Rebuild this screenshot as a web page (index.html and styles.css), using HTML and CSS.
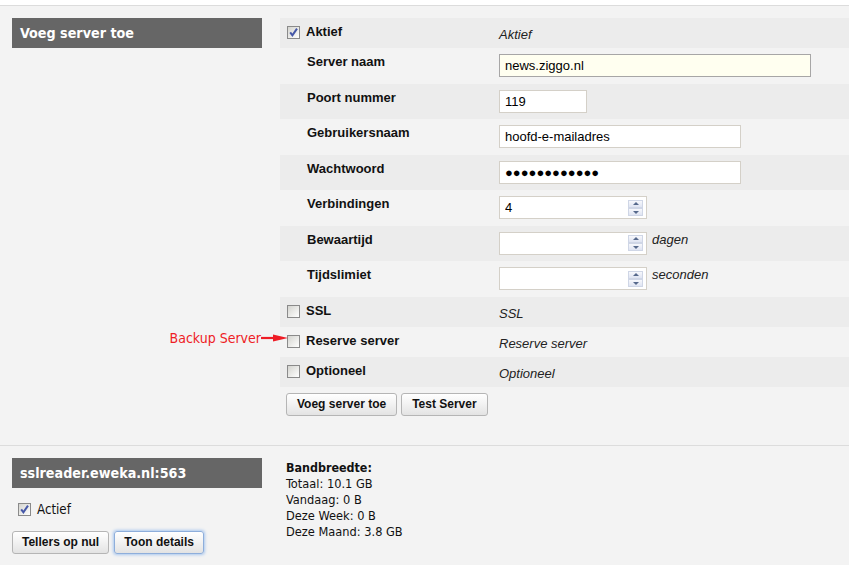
FILE: index.html
```html
<!DOCTYPE html>
<html>
<head>
<meta charset="utf-8">
<link rel="stylesheet" href="styles.css">
</head>
<body>
<div class="topbar"></div>

<div class="section">
  <div class="side">
    <div class="head">Voeg server toe</div>
  </div>
  <div class="main">
    <div class="row dark chk">
      <div class="lab"><span class="cbwrap"><span class="cb on"><svg viewBox="0 0 11 11" width="11" height="11"><path d="M2.2 5.4 L4.4 8.3 L9 1.6" fill="none" stroke="#4658a8" stroke-width="2"/></svg></span></span>Aktief</div>
      <div class="val note">Aktief</div>
    </div>
    <div class="row fld">
      <div class="lab">Server naam</div>
      <div class="val"><input class="in focus w312" type="text" value="news.ziggo.nl"></div>
    </div>
    <div class="row dark fld">
      <div class="lab">Poort nummer</div>
      <div class="val"><input class="in w88" type="text" value="119"></div>
    </div>
    <div class="row fld">
      <div class="lab">Gebruikersnaam</div>
      <div class="val"><input class="in w242" type="text" value="hoofd-e-mailadres"></div>
    </div>
    <div class="row dark fld">
      <div class="lab">Wachtwoord</div>
      <div class="val"><input class="in w242 pw" type="text" value="●●●●●●●●●●●●"></div>
    </div>
    <div class="row fld">
      <div class="lab">Verbindingen</div>
      <div class="val">
        <div class="spin"><input class="spin-in" type="text" value="4"><span class="btns"><span class="sb up"></span><span class="sb down"></span></span></div>
      </div>
    </div>
    <div class="row dark fld">
      <div class="lab">Bewaartijd</div>
      <div class="val">
        <div class="spin"><input class="spin-in" type="text" value=""><span class="btns"><span class="sb up"></span><span class="sb down"></span></span></div>
        <span class="unit">dagen</span>
      </div>
    </div>
    <div class="row fld">
      <div class="lab">Tijdslimiet</div>
      <div class="val">
        <div class="spin"><input class="spin-in" type="text" value=""><span class="btns"><span class="sb up"></span><span class="sb down"></span></span></div>
        <span class="unit">seconden</span>
      </div>
    </div>
    <div class="row dark chk">
      <div class="lab"><span class="cbwrap"><span class="cb"></span></span>SSL</div>
      <div class="val note">SSL</div>
    </div>
    <div class="row chk">
      <div class="lab"><span class="cbwrap"><span class="annot"><span class="annot-text">Backup Server</span><svg width="27" height="8" viewBox="0 0 27 8"><path d="M0 4 H15" stroke="#ee1c25" stroke-width="2.2"/><path d="M12 0.5 L27 4 L12 7.5 Z" fill="#ee1c25"/></svg></span><span class="cb"></span></span>Reserve server</div>
      <div class="val note">Reserve server</div>
    </div>
    <div class="row dark chk">
      <div class="lab"><span class="cbwrap"><span class="cb"></span></span>Optioneel</div>
      <div class="val note">Optioneel</div>
    </div>
    <div class="actions">
      <button class="btn">Voeg server toe</button>
      <button class="btn">Test Server</button>
    </div>
  </div>
</div>

<div class="section last">
  <div class="side">
    <div class="head">sslreader.eweka.nl:563</div>
    <div class="active-line"><span class="cb on"><svg viewBox="0 0 11 11" width="11" height="11"><path d="M2.2 5.4 L4.4 8.3 L9 1.6" fill="none" stroke="#4658a8" stroke-width="2"/></svg></span><span>Actief</span></div>
    <div class="side-actions">
      <button class="btn">Tellers op nul</button>
      <button class="btn focused">Toon details</button>
    </div>
  </div>
  <div class="main stats">
    <div class="stat-title">Bandbreedte:</div>
    <div>Totaal: 10.1 GB</div>
    <div>Vandaag: 0 B</div>
    <div>Deze Week: 0 B</div>
    <div>Deze Maand: 3.8 GB</div>
  </div>
</div>
</body>
</html>
```

FILE: styles.css
```css
html, body {
  margin: 0;
  padding: 0;
}
body {
  background: #f3f3f3;
  font-family: "Liberation Sans", Arial, sans-serif;
  color: #111;
  width: 849px;
  height: 565px;
  overflow: hidden;
}
.topbar {
  height: 5px;
  background: #fff;
  border-bottom: 1px solid #dcdcdc;
}
.section {
  display: flex;
  padding-top: 12px;
  border-bottom: 1px solid #dcdcdc;
}
.section.last {
  border-bottom: 0;
}
.side {
  width: 268px;
  padding-left: 12px;
  flex: none;
}
.head {
  width: 250px;
  height: 30px;
  box-sizing: border-box;
  background: #666;
  color: #fff;
  font: bold 14.2px/30px "DejaVu Sans Condensed", "DejaVu Sans", sans-serif;
  padding-left: 8px;
}
.main {
  flex: 1;
}
.row {
  display: flex;
  height: 35.5px;
  box-sizing: border-box;
}
.row.chk {
  height: 30px;
}
.row.dark {
  background: #ececec;
}
.lab {
  width: 219px;
  flex: none;
  box-sizing: border-box;
  padding: 6px 0 0 27px;
  font: bold 13px/16px "Liberation Sans", Arial, sans-serif;
  color: #111;
}
.chk .lab {
  display: flex;
  align-items: flex-start;
  padding-left: 7px;
}
.cbwrap {
  position: relative;
  display: block;
  margin-right: 6px;
  margin-top: 2px;
}
.cb {
  display: block;
  width: 13px;
  height: 13px;
  box-sizing: border-box;
  border: 1px solid #8a8a8a;
  background: linear-gradient(135deg, #d4d4cf 0%, #eeeeec 60%, #fff 100%);
}
.cb svg {
  display: block;
}
.val {
  flex: 1;
  display: flex;
  align-items: flex-start;
  padding-top: 6px;
  box-sizing: border-box;
}
.val.note {
  padding-top: 9px;
  font: italic 13px/16px "Liberation Sans", Arial, sans-serif;
  color: #222;
}
.in {
  height: 23px;
  box-sizing: border-box;
  border: 1px solid #d4d0c8;
  background: #fff;
  padding: 0 5px;
  font: 13px "Liberation Sans", Arial, sans-serif;
  color: #000;
  margin: 0;
  outline: none;
}
.in.focus {
  border-color: #a7a6a6;
  background: #fffff0;
}
.w312 { width: 312px; }
.w88 { width: 88px; }
.w242 { width: 242px; }
.spin {
  display: flex;
  align-items: center;
  width: 148px;
  height: 23px;
  box-sizing: border-box;
  border: 1px solid #d4d0c8;
  background: #fff;
}
.spin-in {
  flex: 1;
  min-width: 0;
  border: 0;
  height: 21px;
  padding: 0 5px;
  margin: 0;
  font: 13px "Liberation Sans", Arial, sans-serif;
  color: #000;
  background: transparent;
  outline: none;
}
.btns {
  display: flex;
  flex-direction: column;
  margin-right: 3px;
}
.sb {
  position: relative;
  display: block;
  width: 15px;
  height: 8px;
  box-sizing: border-box;
  border: 1px solid #cfd6e6;
  background: linear-gradient(#f7f8fc, #dfe4f2);
}
.sb::after {
  content: "";
  position: absolute;
  left: 4px;
  width: 0;
  height: 0;
  border-left: 3px solid transparent;
  border-right: 3px solid transparent;
}
.sb.up::after {
  top: 1px;
  border-bottom: 3px solid #56698c;
}
.sb.down::after {
  top: 2px;
  border-top: 3px solid #56698c;
}
.unit {
  margin-left: 5px;
  font: italic 13px/16px "Liberation Sans", Arial, sans-serif;
  color: #222;
}
.annot {
  position: absolute;
  right: 100%;
  top: -6px;
  display: flex;
  align-items: center;
  white-space: nowrap;
  margin-right: -1px;
}
.annot-text {
  color: #ee1c25;
  font: 14px/18px "DejaVu Sans Condensed", "DejaVu Sans", sans-serif;
}
.annot svg {
  display: block;
  margin-top: 1px;
}
.actions {
  display: flex;
  gap: 4px;
  padding: 6px 0 29px 6px;
}
.btn {
  height: 23px;
  box-sizing: border-box;
  padding: 0 9px;
  margin: 0;
  border: 1px solid #b5b5b5;
  border-radius: 3px;
  background: linear-gradient(#ffffff, #f3f3f3 45%, #e3e3e3);
  font: bold 12px "Liberation Sans", Arial, sans-serif;
  color: #111;
}
.actions .btn {
  padding: 0 10px;
}
.btn.focused {
  border-color: #8eaedb;
  box-shadow: 0 0 3px 1px #a9c7ef;
}
.active-line {
  display: flex;
  align-items: center;
  gap: 6px;
  height: 16px;
  margin-top: 14px;
  padding-left: 6px;
  font: 13.2px/16px "DejaVu Sans Condensed", "DejaVu Sans", sans-serif;
  color: #111;
}
.side-actions {
  display: flex;
  gap: 5px;
  margin-top: 13px;
}
.stats {
  padding: 2px 0 0 6px;
  font: 12.7px/16px "DejaVu Sans Condensed", "DejaVu Sans", sans-serif;
  color: #111;
}
.stat-title {
  font-weight: bold;
  font-size: 12.4px;
}
```
